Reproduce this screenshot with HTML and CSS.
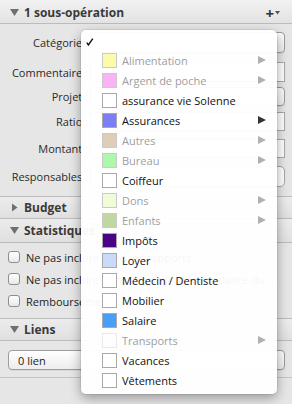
FILE: index.html
```html
<!DOCTYPE html>
<html lang="fr">
<head>
<meta charset="utf-8">
<link rel="stylesheet" href="styles.css">
</head>
<body>
<div class="panel">
  <div class="hdr hdr-top">
    <span class="tri"><svg width="9" height="7" viewBox="0 0 9 7"><polygon points="0,0 9,0 4.5,7"/></svg></span>
    <span class="hdr-title">1 sous-opération</span>
    <span class="plus">+<svg width="5" height="4" viewBox="0 0 5 4"><polygon points="0,0 5,0 2.5,3.5"/></svg></span>
  </div>
  <div class="form">
    <div class="row r1"><span class="lbl">Catégorie :</span><div class="ctl popup"></div></div>
    <div class="row r2"><span class="lbl">Commentaire :</span><div class="ctl field"></div></div>
    <div class="row r3"><span class="lbl">Projet :</span><div class="ctl popup"></div></div>
    <div class="row r4"><span class="lbl">Ratio :</span><div class="ctl field"></div></div>
    <div class="row r5"><span class="lbl">Montant :</span><div class="ctl field"></div></div>
    <div class="row r6"><span class="lbl">Responsables :</span><div class="ctl token"></div></div>
  </div>
  <div class="hdr hdr-budget">
    <span class="tri"><svg width="9" height="9" viewBox="0 0 9 9"><polygon points="2,0.5 7.5,4.5 2,8.5"/></svg></span>
    <span class="hdr-title">Budget</span>
  </div>
  <div class="hdr">
    <span class="tri"><svg width="9" height="7" viewBox="0 0 9 7"><polygon points="0,0 9,0 4.5,7"/></svg></span>
    <span class="hdr-title">Statistiques</span>
  </div>
  <div class="checks">
    <div class="chk"><span class="box"></span><span class="chk-lbl">Ne pas inclure dans les rapports</span></div>
    <div class="chk"><span class="box"></span><span class="chk-lbl">Ne pas inclure dans le calcul de la tendance du mois</span></div>
    <div class="chk"><span class="box"></span><span class="chk-lbl">Remboursement</span></div>
  </div>
  <div class="hdr hdr-liens">
    <span class="tri"><svg width="9" height="7" viewBox="0 0 9 7"><polygon points="0,0 9,0 4.5,7"/></svg></span>
    <span class="hdr-title">Liens</span>
  </div>
  <div class="liens">
    <div class="popup lien-popup">0 lien</div>
  </div>
</div>

<div class="menu">
  <div class="mi"><span class="check"><svg width="8" height="8" viewBox="0 0 8 8"><path d="M0.8 4.6 L2.4 7 L6.8 0.6" /></svg></span></div>
  <div class="mi dis"><span class="sw" style="background:#fbfb9c"></span><span class="txt">Alimentation</span><span class="arr"></span></div>
  <div class="mi dis"><span class="sw" style="background:#fba6f6"></span><span class="txt">Argent de poche</span><span class="arr"></span></div>
  <div class="mi"><span class="sw"></span><span class="txt">assurance vie Solenne</span></div>
  <div class="mi"><span class="sw" style="background:#7d7df5"></span><span class="txt">Assurances</span><span class="arr"></span></div>
  <div class="mi dis"><span class="sw" style="background:#d9c6ab"></span><span class="txt">Autres</span><span class="arr"></span></div>
  <div class="mi dis"><span class="sw" style="background:#a0f79d"></span><span class="txt">Bureau</span><span class="arr"></span></div>
  <div class="mi"><span class="sw"></span><span class="txt">Coiffeur</span></div>
  <div class="mi dis"><span class="sw" style="background:#eefcd2"></span><span class="txt">Dons</span><span class="arr"></span></div>
  <div class="mi dis"><span class="sw" style="background:#b4d28f"></span><span class="txt">Enfants</span><span class="arr"></span></div>
  <div class="mi"><span class="sw" style="background:#4b0486"></span><span class="txt">Impôts</span></div>
  <div class="mi"><span class="sw" style="background:#c9dbf8"></span><span class="txt">Loyer</span></div>
  <div class="mi"><span class="sw"></span><span class="txt">Médecin / Dentiste</span></div>
  <div class="mi"><span class="sw"></span><span class="txt">Mobilier</span></div>
  <div class="mi"><span class="sw" style="background:#47a0f6"></span><span class="txt">Salaire</span></div>
  <div class="mi dis"><span class="sw sw-faint"></span><span class="txt">Transports</span><span class="arr"></span></div>
  <div class="mi"><span class="sw"></span><span class="txt">Vacances</span></div>
  <div class="mi"><span class="sw"></span><span class="txt">Vêtements</span></div>
</div>
</body>
</html>
```
FILE: styles.css
```css
* { box-sizing: border-box; }
html, body {
  margin: 0;
  padding: 0;
}
body {
  width: 292px;
  height: 404px;
  overflow: hidden;
  background: #e6e6e6;
  font-family: "Open Sans", "Noto Sans", sans-serif;
  font-size: 11px;
  color: #222;
  position: relative;
}
.panel {
  display: flex;
  flex-direction: column;
}
.hdr {
  display: flex;
  align-items: center;
  height: 24px;
  border-bottom: 1px solid #bcbcbc;
  background: linear-gradient(#ececec, #e0e0e0);
  padding: 0 12px 0 10px;
  font-weight: 700;
  font-size: 12px;
  color: #3a3a3a;
}
.hdr-top {
  padding-top: 2px;
  background: linear-gradient(#f1f1f1, #e3e3e3);
}
.hdr-budget {
  height: 23px;
  border-top: 1px solid #bcbcbc;
}
.hdr-liens {
  height: 23px;
  border-top: 1px solid #bcbcbc;
}
.tri {
  width: 9px;
  margin-right: 5px;
  display: flex;
  align-items: center;
}
.tri svg { fill: #6f6f6f; }
.hdr-title { line-height: 16px; }
.plus {
  margin-left: auto;
  font-size: 15px;
  font-weight: 700;
  color: #333;
  display: flex;
  align-items: center;
  gap: 1px;
  line-height: 12px;
}
.plus svg { fill: #555; margin-top: 1px; }

.form {
  padding: 8px 0 9px;
  display: flex;
  flex-direction: column;
}
.row {
  display: flex;
  align-items: center;
}
.r1 { height: 21px; }
.r2 { height: 20px; margin-top: 9px; }
.r3 { height: 19px; margin-top: 5px; }
.r4 { height: 19px; margin-top: 6px; }
.r5 { height: 19px; margin-top: 8px; }
.r6 { height: 21px; margin-top: 8px; }
.lbl {
  width: 88px;
  text-align: right;
  white-space: nowrap;
  color: #2a2a2a;
  flex: none;
}
.ctl {
  margin-left: 2px;
  width: 195px;
  height: 100%;
}
.popup {
  border: 1px solid #9d9d9d;
  border-radius: 4px;
  background: linear-gradient(#ffffff, #ededed);
  box-shadow: 0 1px 0 rgba(0,0,0,0.06);
}
.field {
  border: 1px solid #a9a9a9;
  background: #fff;
}
.token {
  border: 1px solid #a5a5a5;
  border-radius: 5px;
  background: #fff;
}

.checks {
  padding: 3px 8px 6px 8px;
  display: flex;
  flex-direction: column;
}
.chk {
  height: 22px;
  display: flex;
  align-items: center;
}
.box {
  width: 12px;
  height: 12px;
  flex: none;
  border: 1px solid #8e8e8e;
  border-radius: 3px;
  background: linear-gradient(#ffffff, #e9e9e9);
}
.chk-lbl {
  margin-left: 6px;
  white-space: nowrap;
  overflow: hidden;
  text-overflow: ellipsis;
  color: #222;
}

.liens {
  padding: 9px 7px 7px 8px;
  border-bottom: 1px solid #c4c4c4;
}
.lien-popup {
  height: 20px;
  display: flex;
  align-items: center;
  padding-left: 9px;
  color: #222;
}

.menu {
  position: absolute;
  left: 81px;
  top: 30px;
  width: 196px;
  height: 364px;
  padding-bottom: 4px;
  background: rgba(255, 255, 255, 0.955);
  border-radius: 5px;
  box-shadow: 0 4px 12px rgba(0, 0, 0, 0.35), 0 0 0 1px rgba(0, 0, 0, 0.06);
  display: flex;
  flex-direction: column;
}
.mi {
  height: 20px;
  flex: none;
  display: flex;
  align-items: center;
  padding-left: 21px;
  color: #111;
}
.check {
  margin-left: -16px;
  display: flex;
  margin-top: 4px;
}
.check svg {
  fill: none;
  stroke: #111;
  stroke-width: 1.4;
}
.sw {
  width: 15px;
  height: 15px;
  flex: none;
  border: 1px solid #a9a9a9;
  background: #fff;
  margin-right: 5px;
}
.sw-faint { border-color: #e2e2e2; }
.dis { color: #9e9e9e; }
.dis .sw { opacity: 0.85; border-color: #c2c2c2; }
.dis .sw-faint { border-color: #e6e6e6; }
.arr {
  margin-left: auto;
  margin-right: 11px;
  width: 0;
  height: 0;
  border-top: 4.5px solid transparent;
  border-bottom: 4.5px solid transparent;
  border-left: 8px solid #333;
}
.dis .arr { border-left-color: #b0b0b0; }
```
